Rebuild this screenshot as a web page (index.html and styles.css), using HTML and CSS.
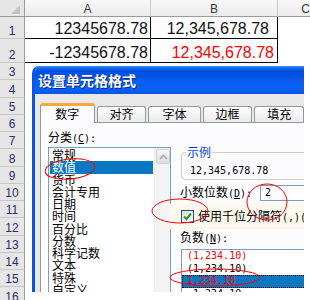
FILE: index.html
```html
<!DOCTYPE html>
<html lang="zh-CN">
<head>
    <meta charset="UTF-8">
    <title>设置单元格格式</title>
    <link rel="stylesheet" href="styles.css">
</head>
<body>
<div class="screen">
    <!-- 表格区域 -->
    <div class="sheet">
        <div class="row head">
            <div class="corner">
                <svg width="10" height="10" viewBox="0 0 10 10"><polygon points="9,0 9,9 0,9" fill="#c4c4c4"/></svg>
            </div>
            <div class="ch">A</div>
            <div class="ch">B</div>
            <div class="ch">C</div>
        </div>
        <div class="row r1">
            <div class="rh">1</div>
            <div class="cell">12345678.78</div>
            <div class="cell pr1">12,345,678.78</div>
            <div class="blank"></div>
        </div>
        <div class="row r2">
            <div class="rh">2</div>
            <div class="cell">-12345678.78</div>
            <div class="cell pr2 red">12,345,678.78</div>
            <div class="blank"></div>
        </div>
        <div class="row rs"><div class="rh">3</div></div>
        <div class="row rs"><div class="rh">4</div></div>
        <div class="row rs"><div class="rh">5</div></div>
        <div class="row rs"><div class="rh">6</div></div>
        <div class="row rs"><div class="rh">7</div></div>
        <div class="row rs"><div class="rh">8</div></div>
        <div class="row rs"><div class="rh">9</div></div>
        <div class="row rs"><div class="rh">10</div></div>
        <div class="row rs"><div class="rh">11</div></div>
        <div class="row rs"><div class="rh">12</div></div>
        <div class="row rs"><div class="rh">13</div></div>
        <div class="row rs"><div class="rh">14</div></div>
        <div class="row rs"><div class="rh">15</div></div>
        <div class="row rs"><div class="rh">16</div></div>
    </div>

    <!-- 对话框 -->
    <div class="dialog">
        <div class="title">设置单元格格式</div>
        <div class="tabs">
            <div class="tab on">数字</div>
            <div class="tab">对齐</div>
            <div class="tab t3">字体</div>
            <div class="tab">边框</div>
            <div class="tab">填充</div>
        </div>
        <div class="panel">
            <div class="cat">
                <div class="lbl">分类<span class="hw">(<u>C</u>):</span></div>
                <div class="catlist">
                    <div class="items">
                        <div class="item">常规</div>
                        <div class="item sel">数值</div>
                        <div class="item">货币</div>
                        <div class="item">会计专用</div>
                        <div class="item">日期</div>
                        <div class="item">时间</div>
                        <div class="item">百分比</div>
                        <div class="item">分数</div>
                        <div class="item">科学记数</div>
                        <div class="item">文本</div>
                        <div class="item">特殊</div>
                        <div class="item">自定义</div>
                    </div>
                    <div class="vscroll">
                        <div class="up">
                            <svg width="9" height="6" viewBox="0 0 9 6"><path d="M1 5 L4.5 1.5 L8 5" fill="none" stroke="#a8a8a8" stroke-width="1.6"/></svg>
                        </div>
                    </div>
                </div>
            </div>
            <div class="opts">
                <fieldset class="sample">
                    <legend>示例</legend>
                    <div class="sample-val mono">12,345,678.78</div>
                </fieldset>
                <div class="dec">
                    <div class="lbl dec-lbl">小数位数<span class="hw">(<u>D</u>):</span></div>
                    <div class="num-in mono">2</div>
                </div>
                <div class="thou">
                    <div class="box">
                        <svg width="11" height="11" viewBox="0 0 11 11"><path d="M2 5.5 L4.5 8 L9 2.5" fill="none" stroke="#21a121" stroke-width="2"/></svg>
                    </div>
                    <span>使用千位分隔符<span class="hw">(,)(<u>U</u>)</span></span>
                </div>
                <div class="lbl neg-lbl">负数<span class="hw">(<u>N</u>):</span></div>
                <div class="neglist">
                    <div class="nitem mono red">(1,234.10)</div>
                    <div class="nitem mono">(1,234.10)</div>
                    <div class="nitem mono sel">1,234.10</div>
                    <div class="nitem mono">-1,234.10</div>
                </div>
            </div>
        </div>
    </div>

    <!-- 红色标注圈 -->
    <svg class="marks" width="310" height="300" viewBox="0 0 310 300">
        <ellipse cx="70" cy="169" rx="25" ry="10" transform="rotate(-6 70 169)"/>
        <ellipse cx="267" cy="202" rx="20" ry="18"/>
        <ellipse cx="180" cy="211" rx="28" ry="12"/>
        <ellipse cx="215" cy="277.5" rx="45" ry="8.5"/>
    </svg>
</div>
</body>
</html>
```

FILE: styles.css
```css
*{
    box-sizing: border-box;
}
body{
    margin: 0;
    background: #fff;
    overflow: hidden;
    font-family: "Liberation Sans", Arial, sans-serif;
}
.screen{
    position: relative;
    width: 310px;
    height: 300px;
    overflow: hidden;
}
/* 表格 */
.sheet{
    width: 334px;
}
.row{
    display: grid;
    grid-template-columns: 25px 126px 127px 56px;
}
.head{
    height: 17px;
}
.r1{
    height: 22px;
}
.r2{
    height: 24px;
}
.rs{
    height: 17.25px;
}
.corner{
    background: #e6e6e6;
    border-right: 1px solid #9b9b9b;
    border-bottom: 1px solid #9b9b9b;
    display: flex;
    align-items: flex-end;
    justify-content: flex-end;
    padding: 0 3px 1px 0;
}
.ch{
    background: linear-gradient(#f8f8f8, #ebebeb);
    border-right: 1px solid #c8c8c8;
    border-bottom: 1px solid #9b9b9b;
    text-align: center;
    font-size: 12px;
    line-height: 12px;
    padding-top: 3px;
    color: #3a3a3a;
}
.rh{
    background: #e6e6e6;
    border-right: 1px solid #9b9b9b;
    border-bottom: 1px solid #c6c6c6;
    display: flex;
    align-items: flex-end;
    justify-content: center;
    font-size: 12px;
    line-height: 12px;
    padding-bottom: 1px;
    color: #2d2d72;
}
.cell{
    border-right: 1px solid #000;
    border-bottom: 1px solid #000;
    display: flex;
    align-items: flex-end;
    justify-content: flex-end;
    font-size: 16px;
    line-height: 16px;
    padding: 0 2px 1px 0;
    color: #111;
}
.pr1{
    padding-right: 8px;
}
.pr2{
    padding-right: 3px;
}
.red{
    color: #ff0000;
}
/* 对话框 */
.dialog{
    position: absolute;
    left: 32px;
    top: 66px;
    width: 272px;
    height: 226px;
    overflow: hidden;
    background: #e8e8e8;
    border-left: 3px solid #0c55e3;
    border-top-left-radius: 7px;
    font-family: "Noto Sans CJK SC", sans-serif;
    font-size: 12px;
    color: #000;
}
.title{
    height: 28px;
    padding-left: 3px;
    line-height: 28px;
    font-size: 14px;
    font-weight: bold;
    color: #fff;
    text-shadow: 1px 1px 0 #0a2a8c;
    background: linear-gradient(#4a98ff 0, #1266f6 2px, #0050de 5px, #0052e2 10px, #0a5ef2 15px, #0a60f4 23px, #0055e5 28px);
}
.tabs{
    display: flex;
    align-items: flex-end;
    gap: 2px;
    height: 19px;
    margin: 9px 0 0 5px;
    position: relative;
    z-index: 1;
}
.tab{
    width: 50px;
    height: 16px;
    border: 1px solid #919b9c;
    border-bottom: 0;
    border-radius: 3px 3px 0 0;
    background: linear-gradient(#fefefe, #eaeaea);
    text-align: center;
    line-height: 14px;
}
.tab.t3{
    width: 53px;
}
.tab.on{
    width: 55px;
    height: 20px;
    margin-bottom: -1px;
    background: #fcfcfe;
    border-top: 3px solid #f4a93a;
    line-height: 15px;
}
.panel{
    width: 300px;
    height: 200px;
    margin-left: 5px;
    border: 1px solid #919b9c;
    background: #fcfcfe;
    display: flex;
    padding: 7px 0 0 7px;
}
.lbl{
    line-height: 14px;
    white-space: nowrap;
}
/* 半角字符 */
.hw,
.mono{
    font-family: "DejaVu Sans Mono", monospace;
    font-size: 10px;
}
.cat{
    width: 123px;
    flex: none;
}
.catlist{
    margin-top: 1px;
    width: 123px;
    height: 160px;
    border: 1px solid #7f9db9;
    background: #fff;
    display: flex;
}
.items{
    flex: 1;
    padding: 1px;
}
.item{
    height: 12.27px;
    line-height: 12.27px;
    padding-left: 2px;
    white-space: nowrap;
    overflow: hidden;
}
.item.sel{
    background: #0a78c0;
    color: #fff;
}
.vscroll{
    width: 16px;
    background: #f4f4f4;
    border-left: 1px solid #ececec;
}
.up{
    height: 15px;
    margin: 1px 0 0 1px;
    border: 1px solid #d0d0d0;
    border-radius: 2px;
    background: linear-gradient(#f6f6f6, #dddddd);
    display: flex;
    align-items: center;
    justify-content: center;
}
.opts{
    width: 140px;
    flex: none;
    margin-left: 9px;
    padding-top: 15px;
}
.sample{
    margin: 0 0 0 1px;
    padding: 0 0 0 4px;
    border: 1px solid #d0d0bf;
    border-radius: 4px;
    width: 140px;
}
.sample legend{
    padding: 0 1px;
    color: #0046d5;
    line-height: 14px;
}
.sample-val{
    height: 14px;
    line-height: 14px;
    margin: 5px 0 1px;
    padding-left: 4px;
}
.dec{
    display: flex;
    align-items: center;
    height: 16px;
    margin-top: 5px;
}
.dec-lbl{
    width: 80px;
    flex: none;
}
.num-in{
    width: 60px;
    height: 16px;
    flex: none;
    border: 1px solid #7f9db9;
    background: #fff;
    line-height: 14px;
    padding-left: 4px;
}
.thou{
    display: flex;
    align-items: center;
    gap: 4px;
    margin: 3px 0 0 -10px;
    padding: 5px 0 5px 11px;
    background: #fdf9ee;
    white-space: nowrap;
    line-height: 13px;
}
.box{
    width: 13px;
    height: 13px;
    flex: none;
    border: 1px solid #1c5180;
    background: linear-gradient(135deg, #dcdcd7, #fff);
}
.box svg{
    display: block;
}
.neg-lbl{
    margin-top: 1px;
}
.neglist{
    margin: 3px 0 0 1px;
    width: 140px;
    height: 80px;
    border: 1px solid #7f9db9;
    background: #fff;
}
.nitem{
    height: 12.5px;
    line-height: 12.5px;
    padding-left: 5px;
    white-space: nowrap;
}
.nitem.sel{
    background: #0a78c0;
    color: #ff0000;
    outline: 1px dotted #000;
    outline-offset: -1px;
}
/* 标注 */
.marks{
    position: absolute;
    left: 0;
    top: 0;
    pointer-events: none;
}
.marks ellipse{
    fill: none;
    stroke: #ff0000;
    stroke-width: 1;
}
```
